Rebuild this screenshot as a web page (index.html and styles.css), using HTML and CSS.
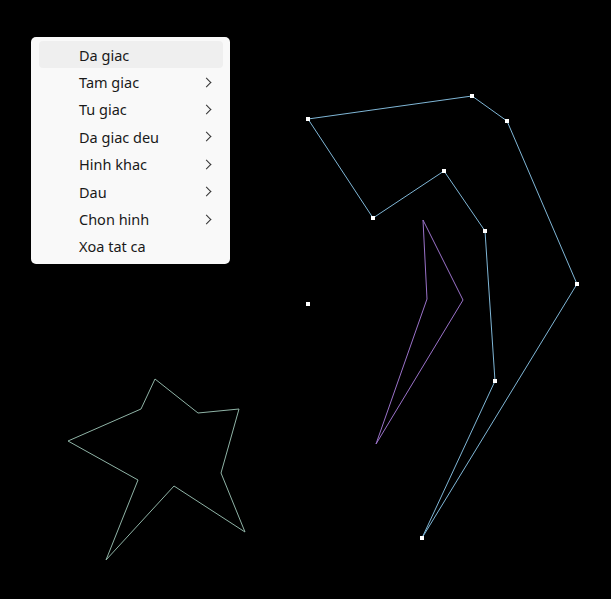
FILE: index.html
```
<!DOCTYPE html>
<html lang="en">
<head>
  <meta charset="UTF-8" />
  <title>Ve hinh</title>
  <link rel="stylesheet" href="styles.css">
</head>
<body>
  <div class="board">
    <svg class="canvas" width="611" height="599" viewBox="0 0 611 599">
      <!-- da giac 9 dinh -->
      <polygon class="shape blue" points="308,119 472,96 507,121 577,284 422,538 495,381 485,231 444,171 373,218" />
      <!-- tu giac -->
      <polygon class="shape purple" points="423,220 463,300 376,444 427,299" />
      <!-- ngoi sao -->
      <polygon class="shape green" points="155,379 198,413 239,409 221,473 245,532 174,486 106,560 138,480 68,441 141,409" />
      <g class="dots">
        <rect x="306" y="117" width="4" height="4" />
        <rect x="470" y="94" width="4" height="4" />
        <rect x="505" y="119" width="4" height="4" />
        <rect x="575" y="282" width="4" height="4" />
        <rect x="420" y="536" width="4" height="4" />
        <rect x="493" y="379" width="4" height="4" />
        <rect x="483" y="229" width="4" height="4" />
        <rect x="442" y="169" width="4" height="4" />
        <rect x="371" y="216" width="4" height="4" />
        <rect x="306" y="302" width="4" height="4" />
      </g>
    </svg>

    <ul class="menu">
      <li class="active">Da giac</li>
      <li>Tam giac <span class="arrow"></span></li>
      <li>Tu giac <span class="arrow"></span></li>
      <li>Da giac deu <span class="arrow"></span></li>
      <li>Hinh khac <span class="arrow"></span></li>
      <li>Dau <span class="arrow"></span></li>
      <li>Chon hinh <span class="arrow"></span></li>
      <li>Xoa tat ca</li>
    </ul>
  </div>
</body>
</html>
```

FILE: styles.css
```
* {
  margin: 0;
  padding: 0;
  box-sizing: border-box;
}

body {
  background: #000000;
  font-family: "Noto Sans", "Open Sans", sans-serif;
  width: 611px;
  height: 599px;
  overflow: hidden;
}

.board {
  position: relative;
  width: 611px;
  height: 599px;
}

.canvas {
  display: block;
}

.shape {
  fill: none;
  stroke-width: 1;
}

.blue {
  stroke: #7fb6d6;
}

.purple {
  stroke: #9a72c9;
}

.green {
  stroke: #8fb3a6;
}

.dots rect {
  fill: #ffffff;
}

/* context menu */
.menu {
  position: absolute;
  left: 31px;
  top: 37px;
  width: 199px;
  padding: 4px 7px 4px 8px;
  list-style: none;
  background: #f9f9f9;
  border-radius: 5px;
}

.menu li {
  display: flex;
  align-items: center;
  justify-content: space-between;
  height: 27.4px;
  padding: 0 13px 0 40px;
  font-size: 14.5px;
  color: #1a1a1a;
  border-radius: 4px;
}

.menu li.active {
  background: #efefef;
}

.arrow {
  width: 7px;
  height: 7px;
  border-right: 1.5px solid #333333;
  border-bottom: 1.5px solid #333333;
  transform: rotate(-45deg);
}
```
